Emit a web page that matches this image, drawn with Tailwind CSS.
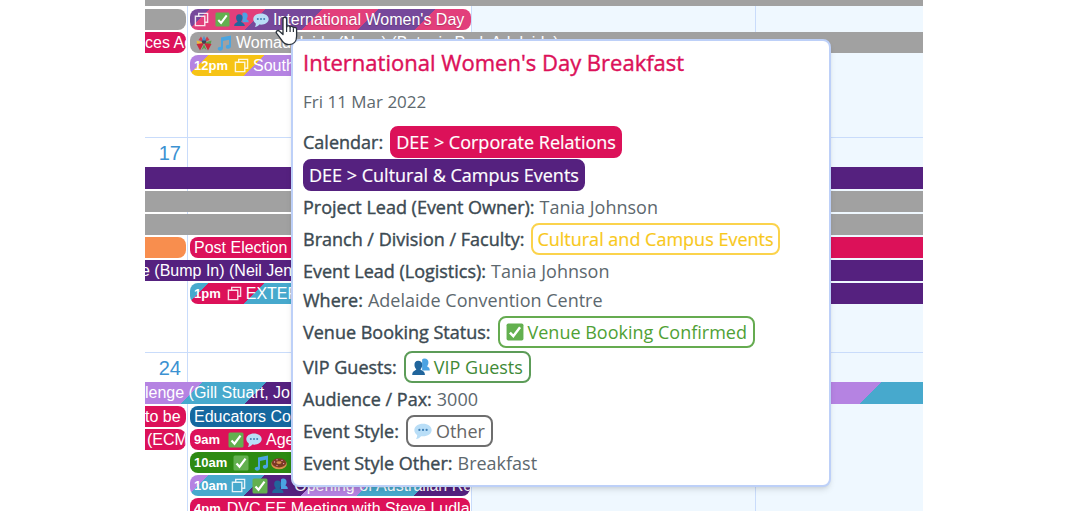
<!DOCTYPE html>
<html lang="en">
<head>
    <meta charset="UTF-8">
    <meta name="viewport" content="width=device-width, initial-scale=1.0">
    <title>Events Calendar</title>
    <script src="https://cdn.jsdelivr.net/npm/@tailwindcss/browser@4"></script>
</head>
<body class="bg-white">
    <!-- Icons -->
    <svg class="hidden">
        <symbol id="copy" viewBox="0 0 16 16">
            <path d="M5 4V1.500h9.500V11H12M1.500 4.500H11.500V14.500H1.500z" fill="none" stroke="#fff" stroke-opacity=".85" stroke-width="1.500"/>
        </symbol>
        <symbol id="check" viewBox="0 0 16 16">
            <rect x=".5" y=".5" width="15" height="15" rx="1.5" fill="#63b04f"/>
            <path d="M3.5 8.5l3 3.2 6-8" fill="none" stroke="#fff" stroke-width="2.2"/>
        </symbol>
        <symbol id="guests" viewBox="0 0 16 16">
            <path d="M11 .5c2.400 0 3.800 1.600 3.600 3.800-.1 1.500-.8 2.400-1.200 3.300 1.400.5 2.400 1.400 2.400 3.400H9V1.400C9.500.8 10.200.5 11 .5z" fill="#4ba3e3"/>
            <path d="M5.500 2.500c2.400 0 3.800 1.600 3.600 3.900-.1 1.600-.8 2.800-1.500 3.600.1 1.300 3.900 1 3.900 5H.2c0-4 3.500-3.700 3.600-5-.8-.8-1.500-2-1.600-3.600-.1-2.300 1-3.900 3.300-3.900z" fill="#21659c"/>
        </symbol>
        <symbol id="speech" viewBox="0 0 16 16">
            <path d="M8 1.500c4.300 0 7.700 2.300 7.700 5.600S12.300 12.700 8 12.700c-.6 0-1.100 0-1.700-.1C5.200 14 3.600 15 1.800 15c.7-.9 1.100-2 1-3.400C1.200 10.500.3 9 .3 7.100.3 3.800 3.700 1.500 8 1.500z" fill="#b9def7"/>
            <g fill="#3f7fb5"><circle cx="4.800" cy="7" r="1"/><circle cx="8" cy="7" r="1"/><circle cx="11.200" cy="7" r="1"/></g>
        </symbol>
        <symbol id="note" viewBox="0 0 16 16">
            <path d="M5 2.500L15 .5v10.800c0 1.500-1.300 2.500-2.800 2.500-1.400 0-2.400-.8-2.400-1.900 0-1.300 1.400-2.200 3.200-2V4.700l-6 1.200v7.300c0 1.500-1.300 2.500-2.900 2.500-1.400 0-2.400-.8-2.400-1.900 0-1.300 1.500-2.200 3.300-2z" fill="#4aa5e0"/>
        </symbol>
        <symbol id="donut" viewBox="0 0 16 16">
            <ellipse cx="8" cy="9" rx="7.800" ry="5.300" fill="#d9924f"/>
            <ellipse cx="8" cy="7.800" rx="7.200" ry="4.600" fill="#7b3a24"/>
            <ellipse cx="8" cy="7.600" rx="2.600" ry="1.300" fill="#d9924f"/>
            <g fill="#f29bc0"><circle cx="3.500" cy="7" r=".7"/><circle cx="6" cy="4.800" r=".7"/><circle cx="11" cy="5.400" r=".7"/><circle cx="12.600" cy="8.600" r=".7"/><circle cx="6" cy="10.600" r=".7"/></g>
        </symbol>
        <symbol id="party" viewBox="0 0 16 16">
            <path d="M8 7L5 1.500 2.500 5z" fill="#cf3d4b"/><path d="M8 7l3-5.500L13.500 5z" fill="#cf3d4b"/>
            <path d="M8 8L.5 5.500 1.500 10z" fill="#e9bb3f"/><path d="M8 8l7.500-2.500L14.500 10z" fill="#5b9e4a"/>
            <path d="M8 8L.5 9 4 15.500z" fill="#c9283c"/><path d="M8 8l7.500 1L12 15.500z" fill="#c9283c"/>
            <path d="M8 9l-2.500 6L8 13l2.500 2z" fill="#5b9e4a"/><circle cx="8" cy="6.500" r="2.200" fill="#3c4554"/><path d="M6 5.500L8 .8l2 4.700z" fill="#4a8fcf"/>
        </symbol>
    </svg>

    <div class="relative h-screen overflow-hidden px-[145px] font-['Liberation_Sans',sans-serif] text-base text-white">
        <main class="h-full overflow-hidden">

            <!-- Week 1 -->
            <section class="grid h-[137px]">
                <div class="col-start-1 row-start-1 grid grid-cols-[43px_284px_284px_1fr] divide-x divide-[#c9dcfb]">
                    <div></div>
                    <div></div>
                    <div class="bg-[#eff8ff]"></div>
                    <div class="bg-[#eff8ff]"></div>
                </div>
                <div class="col-start-1 row-start-1 grid grid-cols-[43px_284px_284px_1fr] grid-rows-[7px_21px_21px_21px] gap-y-0.5 leading-[21px] whitespace-nowrap">
                    <div class="col-span-4 mb-px bg-[#a1a1a1]"></div>
                    <div class="mr-0.5 rounded-r-lg bg-[#a1a1a1]"></div>
                    <a href="#" class="col-span-3 mx-0.5 flex w-[281px] items-center overflow-hidden rounded-lg bg-[repeating-linear-gradient(-45deg,#e23f7b_0_40px,#76489b_40px_80px)] pl-1 text-shadow-xs">
                        <svg class="mr-1.5 size-[15px]"><use href="#copy"/></svg>
                        <svg class="mr-1 size-[15px]"><use href="#check"/></svg>
                        <svg class="mr-1 size-[15px]"><use href="#guests"/></svg>
                        <svg class="mr-1 size-4"><use href="#speech"/></svg>
                        International Women's Day
                    </a>
                    <a href="#" class="mr-0.5 overflow-hidden rounded-r-lg bg-[#dc1159]">ces Ad</a>
                    <a href="#" class="col-span-3 ml-0.5 flex items-center overflow-hidden rounded-l-lg bg-[#a1a1a1] pl-1.5">
                        <svg class="mr-1 size-4"><use href="#party"/></svg>
                        <svg class="mr-1 size-4"><use href="#note"/></svg>
                        Womadelaide (None) (Botanic Park Adelaide)
                    </a>
                    <a href="#" class="col-start-2 mx-0.5 flex items-center overflow-hidden rounded-lg bg-[repeating-linear-gradient(-45deg,#f6c315_0_40px,#b583e2_40px_80px)] pl-1">
                        <b class="mr-1.5 text-[13px]">12pm</b>
                        <svg class="mr-1 size-[15px]"><use href="#copy"/></svg>
                        South Australia
                    </a>
                </div>
            </section>

            <!-- Week 2 -->
            <section class="grid h-[215px] border-t border-[#c9dcfb]">
                <div class="col-start-1 row-start-1 grid grid-cols-[43px_284px_284px_1fr] divide-x divide-[#c9dcfb]">
                    <div class="pr-1.5 text-right text-xl leading-[30px] text-[#3c92d2]">17</div>
                    <div></div>
                    <div class="bg-[#eff8ff]"></div>
                    <div class="bg-[#eff8ff]"></div>
                </div>
                <div class="col-start-1 row-start-1 mt-[29px] grid grid-cols-[43px_284px_284px_1fr] grid-rows-[22px_21px_21px_21px_21px_21px] gap-y-0.5 leading-[21px] whitespace-nowrap">
                    <div class="col-span-4 bg-[#55217f]"></div>
                    <div class="col-span-4 bg-[#a1a1a1]"></div>
                    <div class="col-span-4 bg-[#a1a1a1]"></div>
                    <div class="mr-0.5 rounded-r-lg bg-[#f88e4e]"></div>
                    <a href="#" class="col-span-3 ml-0.5 rounded-l-lg bg-[#dc1159] pl-1">Post Election</a>
                    <a href="#" class="col-span-4 overflow-hidden bg-[#55217f] -indent-1">e (Bump In) (Neil Jen</a>
                    <a href="#" class="col-start-2 mx-0.5 flex items-center overflow-hidden rounded-lg bg-[repeating-linear-gradient(-45deg,#dc1159_0_40px,#47a9cd_40px_80px)] pl-1">
                        <b class="mr-1.5 text-[13px]">1pm</b>
                        <svg class="mr-1 size-[15px]"><use href="#copy"/></svg>
                        EXTERNAL
                    </a>
                    <div class="col-span-2 bg-[#55217f]"></div>
                </div>
            </section>

            <!-- Week 3 -->
            <section class="grid h-[215px] border-t border-[#c9dcfb]">
                <div class="col-start-1 row-start-1 grid grid-cols-[43px_284px_284px_1fr] divide-x divide-[#c9dcfb]">
                    <div class="pr-1.5 text-right text-xl leading-[30px] text-[#3c92d2]">24</div>
                    <div></div>
                    <div class="bg-[#eff8ff]"></div>
                    <div class="bg-[#eff8ff]"></div>
                </div>
                <div class="col-start-1 row-start-1 mt-[29px] grid grid-cols-[43px_284px_284px_1fr] grid-rows-[22px_21px_21px_21px_21px_21px] gap-y-0.5 leading-[21px] whitespace-nowrap">
                    <a href="#" class="col-span-4 overflow-hidden bg-[repeating-linear-gradient(-45deg,#47a9cd_0_45px,#b583e2_45px_85px,#55217f_85px_120px)]">lenge (Gill Stuart, Jo</a>
                    <a href="#" class="mr-0.5 overflow-hidden rounded-r-lg bg-[#dc1159]">to be</a>
                    <a href="#" class="mx-0.5 rounded-lg bg-[#15689f] pl-1">Educators Conference</a>
                    <a href="#" class="col-start-1 mr-0.5 overflow-hidden rounded-r-lg bg-[#dc1159] pl-0.5">(ECMS)</a>
                    <a href="#" class="mx-0.5 flex items-center rounded-lg bg-[#dc1159] pl-1">
                        <b class="mr-2 text-[13px]">9am</b>
                        <svg class="mr-0.5 size-4"><use href="#check"/></svg>
                        <svg class="mr-1 size-4"><use href="#speech"/></svg>
                        Ageing
                    </a>
                    <a href="#" class="col-start-2 mx-0.5 flex items-center rounded-lg bg-[#2d8a12] pl-1">
                        <b class="mr-1.5 text-[13px]">10am</b>
                        <svg class="mr-1 size-4"><use href="#check"/></svg>
                        <svg class="mr-0.5 size-4"><use href="#note"/></svg>
                        <svg class="size-4"><use href="#donut"/></svg>
                    </a>
                    <a href="#" class="col-start-2 mx-0.5 flex items-center overflow-hidden rounded-lg bg-[repeating-linear-gradient(-45deg,#55217f_0_40px,#47a9cd_40px_80px,#b583e2_80px_120px)] pl-1">
                        <b class="mr-1 text-[13px]">10am</b>
                        <svg class="mr-1.5 size-[15px] shrink-0"><use href="#copy"/></svg>
                        <svg class="mr-1 size-4 shrink-0"><use href="#check"/></svg>
                        <svg class="mr-1.5 size-4 shrink-0"><use href="#guests"/></svg>
                        Opening of Australian Research
                    </a>
                    <a href="#" class="col-start-2 mx-0.5 flex items-center overflow-hidden rounded-lg bg-[#dc1159] pl-1">
                        <b class="mr-1.5 text-[13px]">4pm</b>
                        DVC EE Meeting with Steve Ludlam
                    </a>
                </div>
            </section>
        </main>

        <!-- Event details popup -->
        <div class="absolute top-[39px] left-[291px] w-[540px] rounded-lg border-2 border-[#bdd0f8] bg-white px-2.5 pt-[5px] pb-2 font-['Open_Sans',sans-serif] text-lg text-[#5d686e] shadow-md">
            <h2 class="text-[22px] leading-8 text-[#dc1159] [-webkit-text-stroke:0.4px]">International Women's Day Breakfast</h2>
            <p class="mt-[9px] mb-2.5 text-[17px] leading-[29px]">Fri 11 Mar 2022</p>
            <dl class="leading-7">
                <div class="flex flex-wrap items-center gap-x-[7px] gap-y-px pb-px">
                    <dt class="text-[#3c4a52] [-webkit-text-stroke:0.4px]">Calendar:</dt>
                    <dd class="rounded-lg border-2 border-[#dc1159] bg-[#dc1159] px-1 text-white [-webkit-text-stroke:0.2px]">DEE &gt; Corporate Relations</dd>
                    <dd class="rounded-lg border-2 border-[#55217f] bg-[#55217f] px-1 text-white [-webkit-text-stroke:0.2px]">DEE &gt; Cultural &amp; Campus Events</dd>
                </div>
                <div class="flex h-[29px] items-center gap-x-[5px]">
                    <dt class="text-[#3c4a52] [-webkit-text-stroke:0.4px]">Project Lead (Event Owner):</dt>
                    <dd>Tania Johnson</dd>
                </div>
                <div class="flex h-[35px] items-center gap-x-[7px]">
                    <dt class="text-[#3c4a52] [-webkit-text-stroke:0.4px]">Branch / Division / Faculty:</dt>
                    <dd class="rounded-lg border-2 border-[#fbd34c] px-1 text-[#f8c81c] [-webkit-text-stroke:0.2px]">Cultural and Campus Events</dd>
                </div>
                <div class="flex h-[29px] items-center gap-x-[5px]">
                    <dt class="text-[#3c4a52] [-webkit-text-stroke:0.4px]">Event Lead (Logistics):</dt>
                    <dd>Tania Johnson</dd>
                </div>
                <div class="flex h-[29px] items-center gap-x-[5px]">
                    <dt class="text-[#3c4a52] [-webkit-text-stroke:0.4px]">Where:</dt>
                    <dd>Adelaide Convention Centre</dd>
                </div>
                <div class="flex h-[35px] items-center gap-x-[7px]">
                    <dt class="text-[#3c4a52] [-webkit-text-stroke:0.4px]">Venue Booking Status:</dt>
                    <dd class="flex items-center gap-1 rounded-lg border-2 border-[#65ab50] px-1.5 text-[#4fa135]"><svg class="size-[18px]"><use href="#check"/></svg>Venue Booking Confirmed</dd>
                </div>
                <div class="flex h-[35px] items-center gap-x-[7px]">
                    <dt class="text-[#3c4a52] [-webkit-text-stroke:0.4px]">VIP Guests:</dt>
                    <dd class="flex items-center gap-1 rounded-lg border-2 border-[#5c9c58] px-1.5 text-[#3f8a37]"><svg class="size-[18px]"><use href="#guests"/></svg>VIP Guests</dd>
                </div>
                <div class="flex h-[29px] items-center gap-x-[5px]">
                    <dt class="text-[#3c4a52] [-webkit-text-stroke:0.4px]">Audience / Pax:</dt>
                    <dd>3000</dd>
                </div>
                <div class="flex h-[35px] items-center gap-x-[7px]">
                    <dt class="text-[#3c4a52] [-webkit-text-stroke:0.4px]">Event Style:</dt>
                    <dd class="flex items-center gap-1 rounded-lg border-2 border-[#6e6e6e] px-1.5 text-[#666]"><svg class="size-[18px]"><use href="#speech"/></svg>Other</dd>
                </div>
                <div class="flex h-[29px] items-center gap-x-[5px]">
                    <dt class="text-[#3c4a52] [-webkit-text-stroke:0.4px]">Event Style Other:</dt>
                    <dd>Breakfast</dd>
                </div>
            </dl>
        </div>

        <!-- Hand pointer -->
        <svg class="absolute top-4 left-[275px] h-[30px] w-[23px]" viewBox="0 0 23 30">
            <path d="M8 3.200c0-2.600 3.600-2.600 3.600 0v8c.3-2 3.400-1.900 3.500.4.500-1.800 3.200-1.500 3.300.7.600-1.500 3.200-1.200 3.200 1v7c0 5.200-3 8.300-7.600 8.300-4 0-6-1.700-7.700-5L1.500 17.200c-1-2 1.400-3.500 3-2l3.500 3.400z" fill="#fff" stroke="#2b333b" stroke-width="1.300" stroke-linejoin="round"/>
            <path d="M11.600 11v5M15.100 12v4M18.400 13v3" stroke="#2b333b" stroke-width="1.200"/>
        </svg>
    </div>
</body>
</html>
